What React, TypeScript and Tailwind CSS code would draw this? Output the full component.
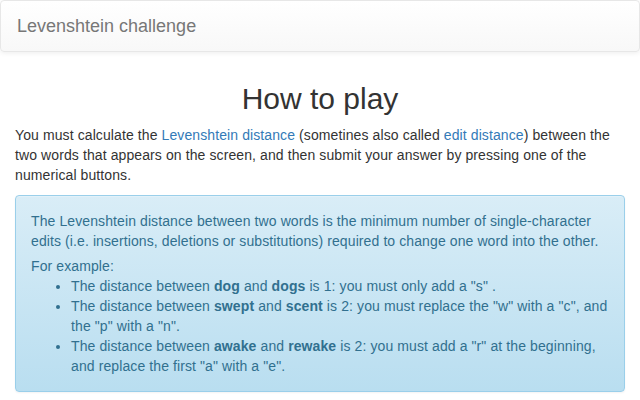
export default function App() {
    return (
        <div className="min-h-[400px] bg-white font-['Liberation_Sans',Arial,sans-serif] text-[14px] leading-[20px] text-[#333]">
            {/* Navbar */}
            <nav className="min-h-[50px] rounded-[4px] border border-[#e7e7e7] bg-linear-to-b from-white to-[#f8f8f8] px-[15px] shadow-[inset_0_1px_0_rgba(255,255,255,0.15),0_1px_5px_rgba(0,0,0,0.075)]">
                <span className="block py-[15px] pl-px text-[18px] leading-[20px] text-[#777] [text-shadow:0_1px_0_rgba(255,255,255,0.25)]">
                    Levenshtein challenge
                </span>
            </nav>

            <div className="px-[15px] tracking-[0.1px]">
                <h2 className="mt-[30px] mb-[10px] text-center text-[30px] leading-[33px] font-medium tracking-normal">How to play</h2>
                <p className="mb-[10px]">
                    You must calculate the{' '}
                    <a href="#" className="text-[#337ab7]">Levenshtein distance</a>{' '}
                    (sometines also called <a href="#" className="text-[#337ab7]">edit distance</a>) between the two
                    words that appears on the screen, and then submit your answer by pressing one of the numerical
                    buttons.
                </p>

                {/* Info alert */}
                <div className="rounded-[4px] border border-[#9acfea] bg-linear-to-b from-[#d9edf7] to-[#b9def0] p-[15px] text-[#31708f] shadow-[inset_0_1px_0_rgba(255,255,255,0.25),0_1px_2px_rgba(0,0,0,0.05)]">
                    <p>
                        The Levenshtein distance between two words is the minimum number of single-character edits
                        (i.e. insertions, deletions or substitutions) required to change one word into the other.
                    </p>
                    <p className="mt-[5px]">For example:</p>
                    <ul className="list-disc pl-[40px]">
                        <li>
                            The distance between <b>dog</b> and <b>dogs</b> is 1: you must only add a "s" .
                        </li>
                        <li>
                            The distance between <b>swept</b> and <b>scent</b> is 2: you must replace the "w" with a
                            "c", and the "p" with a "n".
                        </li>
                        <li>
                            The distance between <b>awake</b> and <b>rewake</b> is 2: you must add a "r" at the
                            beginning, and replace the first "a" with a "e".
                        </li>
                    </ul>
                </div>
            </div>
        </div>
    );
}
